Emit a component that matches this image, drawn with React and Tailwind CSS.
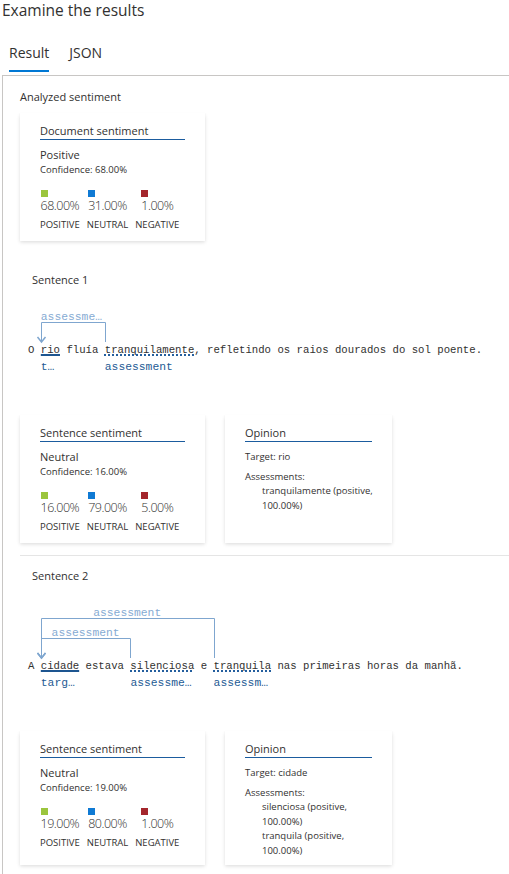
import React from "react";

const CW = 6.4;
const ARC = "#7fa6cf";

const sentences = [
  {
    title: "Sentence 1",
    text: "O rio fluía tranquilamente, refletindo os raios dourados do sol poente.",
    words: [
      { start: 2, len: 3, kind: "target", label: "target" },
      { start: 12, len: 14, kind: "assessment", label: "assessment" },
    ],
    arcs: [{ from: 12, to: 2, level: 1, label: "assessment" }],
    sentiment: { label: "Neutral", conf: "16.00%", pos: "16.00%", neu: "79.00%", neg: "5.00%" },
    opinion: { target: "rio", assessments: ["tranquilamente (positive, 100.00%)"] },
  },
  {
    title: "Sentence 2",
    text: "A cidade estava silenciosa e tranquila nas primeiras horas da manhã.",
    words: [
      { start: 2, len: 6, kind: "target", label: "target" },
      { start: 16, len: 10, kind: "assessment", label: "assessment" },
      { start: 29, len: 9, kind: "assessment", label: "assessment" },
    ],
    arcs: [
      { from: 16, to: 2, level: 1, label: "assessment" },
      { from: 29, to: 2, level: 2, label: "assessment" },
    ],
    sentiment: { label: "Neutral", conf: "19.00%", pos: "19.00%", neu: "80.00%", neg: "1.00%" },
    opinion: {
      target: "cidade",
      assessments: ["silenciosa (positive, 100.00%)", "tranquila (positive, 100.00%)"],
    },
  },
];

const CARD =
  "bg-white shadow-[0_1.6px_3.6px_0_rgba(0,0,0,0.132),0_0.3px_0.9px_0_rgba(0,0,0,0.108)]";

function Col({ color, value, label }) {
  return (
    <div className="flex flex-col items-center">
      <div className="flex flex-col items-start">
        <div className={`w-[7px] h-[7px] ${color}`} />
        <div className="mt-[1px] text-[12.5px] leading-[16px] font-light tracking-[-0.5px] text-[#323130]">
          {value}
        </div>
      </div>
      <div className="mt-[5px] text-[9.5px] leading-[12px] text-[#323130]">{label}</div>
    </div>
  );
}

function SentimentCard({ title, label, conf, pos, neu, neg }) {
  return (
    <div className={`w-[185px] shrink-0 px-[20px] pt-[10px] pb-[10px] ${CARD}`}>
      <div className="text-[11px] leading-[16px] text-[#323130] border-b border-[#1b5c9e]">{title}</div>
      <div className="mt-[7px] text-[11px] leading-[16px] text-[#323130]">{label}</div>
      <div className="text-[9.5px] leading-[14px] text-[#323130]">Confidence: {conf}</div>
      <div className="mt-[13px] flex gap-[7px]">
        <Col color="bg-[#9bc53d]" value={pos} label="POSITIVE" />
        <Col color="bg-[#0f7ad4]" value={neu} label="NEUTRAL" />
        <Col color="bg-[#a4262c]" value={neg} label="NEGATIVE" />
      </div>
    </div>
  );
}

function OpinionCard({ target, assessments }) {
  return (
    <div className={`w-[167px] shrink-0 px-[20px] pt-[10px] pb-[7px] ${CARD}`}>
      <div className="text-[11px] leading-[16px] text-[#323130] border-b border-[#1b5c9e]">Opinion</div>
      <div className="mt-[8px] text-[9.5px] leading-[14px] text-[#323130]">Target: {target}</div>
      <div className="mt-[6px] text-[9.5px] leading-[14px] text-[#323130]">Assessments:</div>
      <div className="pl-[17px] mr-[-8px] text-[9.5px] leading-[14.5px] text-[#323130]">
        {assessments.map((a, i) => (
          <div key={i}>{a}</div>
        ))}
      </div>
    </div>
  );
}

function Annotated({ s }) {
  const L = Math.max(...s.arcs.map((a) => a.level));
  const pt = 34 + (L - 1) * 20;
  const pb = 17;
  const c = pt + 8;
  const lineY = (k) => c - 28 - (k - 1) * 20;
  const tip = c - 8;

  const pieces = [];
  let i = 0;
  s.words.forEach((w, idx) => {
    if (w.start > i) pieces.push(<span key={"t" + idx}>{s.text.slice(i, w.start)}</span>);
    pieces.push(
      <span
        key={"w" + idx}
        className={
          w.kind === "target"
            ? "underline decoration-2 decoration-solid underline-offset-[1px] decoration-[#1d5590] [text-decoration-skip-ink:none]"
            : "underline decoration-2 decoration-dotted underline-offset-[1px] decoration-[#245f9e] [text-decoration-skip-ink:none]"
        }
      >
        {s.text.slice(w.start, w.start + w.len)}
      </span>
    );
    i = w.start + w.len;
  });
  pieces.push(<span key="end">{s.text.slice(i)}</span>);

  const h = pt + 16 + pb;

  return (
    <div className="relative ml-[8px] mt-[20px]" style={{ paddingTop: pt, paddingBottom: pb }}>
      <svg
        className="absolute left-0 top-0 overflow-visible pointer-events-none"
        width="480"
        height={h}
      >
        {s.arcs.map((a, k) => {
          const x1 = Math.round(a.from * CW) + 0.5;
          const x2 = Math.round(a.to * CW) + 0.5;
          const y = lineY(a.level) + 0.5;
          return (
            <g key={k} fill="none" stroke={ARC} strokeWidth="1">
              <path d={`M${x1} ${tip} L${x1} ${y} L${x2} ${y} L${x2} ${tip}`} />
              <path d={`M${x2 - 4} ${tip - 5} L${x2} ${tip} L${x2 + 4} ${tip - 5}`} strokeWidth="1.5" />
            </g>
          );
        })}
      </svg>
      {s.arcs.map((a, k) => (
        <div
          key={"al" + k}
          className="absolute truncate text-center font-['Liberation_Mono',monospace] text-[11.33px] leading-[14px] text-[#86abd3]"
          style={{ left: a.to * CW, width: (a.from - a.to) * CW, top: lineY(a.level) - 12 }}
        >
          {a.label}
        </div>
      ))}
      <div className="whitespace-pre font-['Liberation_Mono',monospace] text-[10.67px] leading-[16px] text-[#323130]">
        {pieces}
      </div>
      {s.words.map((w, k) => (
        <div
          key={"bl" + k}
          className="absolute truncate font-['Liberation_Mono',monospace] text-[11.33px] leading-[14px] text-[#245b94]"
          style={{ left: w.start * CW, width: w.len * CW, top: c + 10 }}
        >
          {w.label}
        </div>
      ))}
    </div>
  );
}

function SentenceSection({ s }) {
  return (
    <div className="pt-[12px] pb-[12px] border-b border-[#e5e5e5]">
      <div className="ml-[12px] text-[11px] leading-[16px] text-[#323130]">{s.title}</div>
      <Annotated s={s} />
      <div className="mt-[40px] flex gap-[20px] items-stretch">
        <SentimentCard title="Sentence sentiment" {...s.sentiment} />
        <OpinionCard {...s.opinion} />
      </div>
    </div>
  );
}

export default function App() {
  return (
    <div className="min-h-screen bg-white font-['Open_Sans',sans-serif] text-[#323130] overflow-hidden">
      <div className="ml-[2px] text-[15.5px] leading-[20px]">Examine the results</div>
      <div className="mt-[23px] ml-[9px] mb-[3px] flex gap-[20px]">
        <div className="text-[14px] leading-[20px] pb-[7px] border-b-2 border-[#0078d4]">Result</div>
        <div className="text-[14px] leading-[20px] pb-[7px] border-b-2 border-transparent">JSON</div>
      </div>
      <div className="ml-[2px] border-l border-t border-[#c8c6c4] pl-[17px] pt-[13px] pb-[20px]">
        <div className="text-[11px] leading-[16px]">Analyzed sentiment</div>
        <div className="mt-[8px] flex">
          <SentimentCard
            title="Document sentiment"
            label="Positive"
            conf="68.00%"
            pos="68.00%"
            neu="31.00%"
            neg="1.00%"
          />
        </div>
        <div className="mt-[19px]">
          {sentences.map((s, i) => (
            <SentenceSection key={i} s={s} />
          ))}
        </div>
      </div>
    </div>
  );
}
